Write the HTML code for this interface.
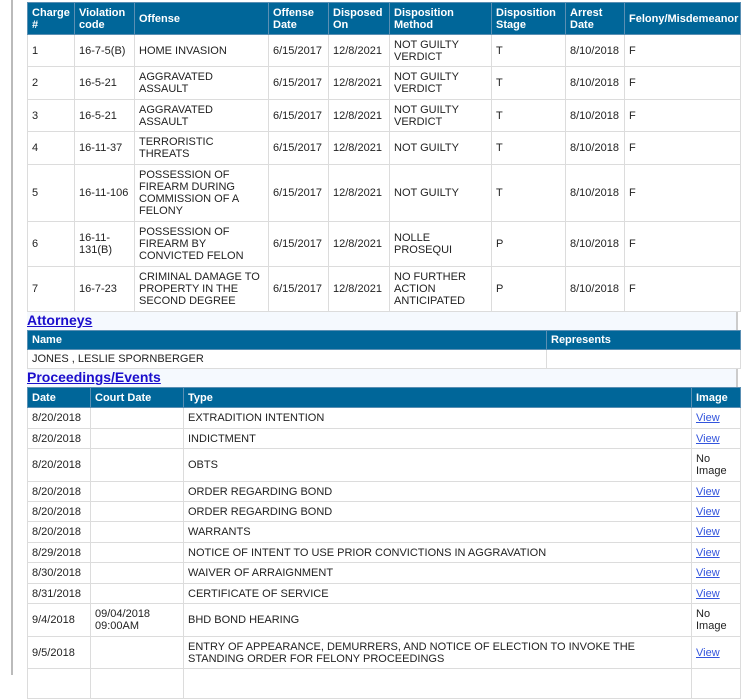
<!DOCTYPE html>
<html><head><meta charset="utf-8"><style>
body{margin:0;background:#fff;font-family:"Liberation Sans",Arial,sans-serif;font-size:11px;color:#222;width:750px;height:675px;overflow:hidden;position:relative}
.vl{position:absolute;left:11px;top:0;width:2px;height:675px;background:#bbb}
.wrap{position:absolute;left:27px;top:2px;width:714px}
table{border-collapse:collapse;width:100%;table-layout:fixed}
td,th{border:1px solid #dcdcdc;padding:0 4px;text-align:left;vertical-align:middle;line-height:12px;font-weight:normal}
th{background:#006699;color:#fff;font-weight:bold;border-color:#5a8fb3}
.title{height:18px;background:#f5f9fe;border-right:2px solid #ccc;width:711px;box-sizing:border-box}
.title a{color:#1a0dcc;font-weight:bold;font-size:14px;text-decoration:underline;line-height:17px}
a.v{color:#3355dd;text-decoration:underline}
</style></head><body>
<div class="vl"></div>
<div class="wrap">
<table>
<colgroup><col style="width:47px"><col style="width:60px"><col style="width:134px"><col style="width:60px"><col style="width:61px"><col style="width:102px"><col style="width:74px"><col style="width:59px"><col></colgroup>
<tr style="height:32px"><th>Charge #</th><th>Violation code</th><th>Offense</th><th>Offense Date</th><th>Disposed On</th><th>Disposition Method</th><th>Disposition Stage</th><th>Arrest Date</th><th>Felony/Misdemeanor</th></tr>
<tr style="height:32px"><td>1</td><td>16-7-5(B)</td><td>HOME INVASION</td><td>6/15/2017</td><td>12/8/2021</td><td>NOT GUILTY VERDICT</td><td>T</td><td>8/10/2018</td><td>F</td></tr>
<tr style="height:33px"><td>2</td><td>16-5-21</td><td>AGGRAVATED ASSAULT</td><td>6/15/2017</td><td>12/8/2021</td><td>NOT GUILTY VERDICT</td><td>T</td><td>8/10/2018</td><td>F</td></tr>
<tr style="height:32px"><td>3</td><td>16-5-21</td><td>AGGRAVATED ASSAULT</td><td>6/15/2017</td><td>12/8/2021</td><td>NOT GUILTY VERDICT</td><td>T</td><td>8/10/2018</td><td>F</td></tr>
<tr style="height:33px"><td>4</td><td>16-11-37</td><td>TERRORISTIC THREATS</td><td>6/15/2017</td><td>12/8/2021</td><td>NOT GUILTY</td><td>T</td><td>8/10/2018</td><td>F</td></tr>
<tr style="height:57px"><td>5</td><td>16-11-106</td><td>POSSESSION OF FIREARM DURING COMMISSION OF A FELONY</td><td>6/15/2017</td><td>12/8/2021</td><td>NOT GUILTY</td><td>T</td><td>8/10/2018</td><td>F</td></tr>
<tr style="height:45px"><td>6</td><td>16-11-131(B)</td><td>POSSESSION OF FIREARM BY CONVICTED FELON</td><td>6/15/2017</td><td>12/8/2021</td><td>NOLLE PROSEQUI</td><td>P</td><td>8/10/2018</td><td>F</td></tr>
<tr style="height:45px"><td>7</td><td>16-7-23</td><td>CRIMINAL DAMAGE TO PROPERTY IN THE SECOND DEGREE</td><td>6/15/2017</td><td>12/8/2021</td><td>NO FURTHER ACTION ANTICIPATED</td><td>P</td><td>8/10/2018</td><td>F</td></tr>
</table>
<div class="title"><a>Attorneys</a></div>
<table>
<colgroup><col style="width:519px"><col></colgroup>
<tr style="height:19px"><th>Name</th><th>Represents</th></tr>
<tr style="height:19px"><td>JONES , LESLIE SPORNBERGER</td><td></td></tr>
</table>
<div class="title"><a>Proceedings/Events</a></div>
<table>
<colgroup><col style="width:63px"><col style="width:93px"><col style="width:508px"><col></colgroup>
<tr style="height:20px"><th>Date</th><th>Court Date</th><th>Type</th><th>Image</th></tr>
<tr style="height:21px"><td>8/20/2018</td><td></td><td>EXTRADITION INTENTION</td><td><a class="v">View</a></td></tr>
<tr style="height:20px"><td>8/20/2018</td><td></td><td>INDICTMENT</td><td><a class="v">View</a></td></tr>
<tr style="height:33px"><td>8/20/2018</td><td></td><td>OBTS</td><td>No Image</td></tr>
<tr style="height:20px"><td>8/20/2018</td><td></td><td>ORDER REGARDING BOND</td><td><a class="v">View</a></td></tr>
<tr style="height:20px"><td>8/20/2018</td><td></td><td>ORDER REGARDING BOND</td><td><a class="v">View</a></td></tr>
<tr style="height:21px"><td>8/20/2018</td><td></td><td>WARRANTS</td><td><a class="v">View</a></td></tr>
<tr style="height:20px"><td>8/29/2018</td><td></td><td>NOTICE OF INTENT TO USE PRIOR CONVICTIONS IN AGGRAVATION</td><td><a class="v">View</a></td></tr>
<tr style="height:21px"><td>8/30/2018</td><td></td><td>WAIVER OF ARRAIGNMENT</td><td><a class="v">View</a></td></tr>
<tr style="height:20px"><td>8/31/2018</td><td></td><td>CERTIFICATE OF SERVICE</td><td><a class="v">View</a></td></tr>
<tr style="height:33px"><td>9/4/2018</td><td>09/04/2018 09:00AM</td><td>BHD BOND HEARING</td><td>No Image</td></tr>
<tr style="height:32px"><td>9/5/2018</td><td></td><td>ENTRY OF APPEARANCE, DEMURRERS, AND NOTICE OF ELECTION TO INVOKE THE STANDING ORDER FOR FELONY PROCEEDINGS</td><td><a class="v">View</a></td></tr>
<tr style="height:30px"><td></td><td></td><td></td><td></td></tr>
</table>
</div>
</body></html>
